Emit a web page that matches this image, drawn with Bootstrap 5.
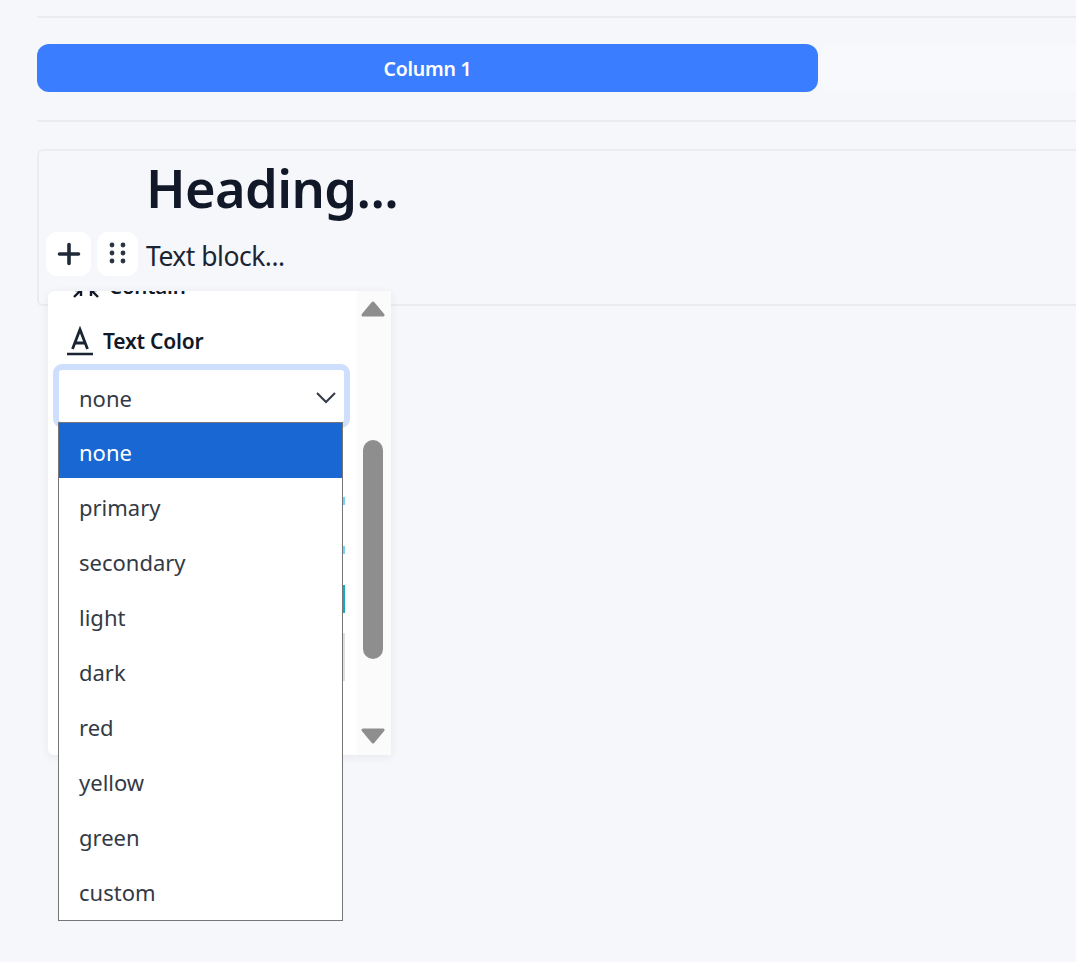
<!DOCTYPE html>
<html lang="en">
<head>
  <meta charset="UTF-8">
  <meta name="viewport" content="width=device-width, initial-scale=1.0">
  <title>Block editor</title>
  <link href="https://cdn.jsdelivr.net/npm/bootstrap@5.3.0/dist/css/bootstrap.min.css" rel="stylesheet">
  <style>
    html, body { height: 100%; }
    body {
      background: #f6f7fb;
      color: #111827;
      font-family: "Noto Sans", "Open Sans", sans-serif;
      overflow: hidden;
    }
    .editor-page { position: relative; height: 962px; padding: 16px 0 0 37px; }
    .rule-line { height: 2px; background: #ebecf0; }

    /* Columns row */
    .column-row { margin: 26px 0 28px; height: 48px; }
    .column-one {
      width: 781px;
      padding-top: 2px;
      background: #3b7dff;
      color: #fff;
      border-radius: 12px;
      font-size: 19.5px;
      font-weight: 600;
      letter-spacing: -0.25px;
    }
    .column-two { background: #f8f9fc; border-radius: 12px 0 0 12px; margin-left: 3px; }

    /* Editor box */
    .editor-box {
      margin-top: 27px;
      height: 157px;
      border: 2px solid #ebecf0;
      border-right: 0;
      border-radius: 6px 0 0 6px;
      padding: 0 0 0 108px;
    }
    .heading-text { font-size: 52.400px; font-weight: 600; line-height: 72px; letter-spacing: -0.6px; margin: 1px 0 0 -1px; color: #111827; }
    .body-text { font-size: 26.500px; line-height: 36px; letter-spacing: -0.5px; margin: 14px 0 0 -1px; color: #1b2433; }

    /* Block tools */
    .tool-btn {
      position: absolute;
      top: 232px;
      height: 44px;
      background: #fff;
      border-radius: 11px;
    }
    .tool-add { left: 46px; width: 45px; }
    .tool-drag { left: 97px; width: 41px; }

    /* Settings popup */
    .settings-pop {
      position: absolute;
      left: 48px;
      top: 291px;
      width: 343px;
      height: 464px;
      background: #fff;
      border-radius: 6px 0 0 6px;
      box-shadow: 0 2px 10px rgba(30, 40, 70, .07);
      overflow: hidden;
    }
    .clip-label {
      position: absolute;
      left: 61px;
      top: -20px;
      font-size: 20.500px;
      font-weight: 600;
      letter-spacing: -0.2px;
      color: #111827;
    }
    .clip-icon { position: absolute; left: 24px; top: -6px; }
    .field-label {
      position: absolute;
      left: 18px;
      top: 33px;
      color: #111827;
      gap: 9px;
    }
    .field-text { font-size: 21px; font-weight: 600; letter-spacing: -0.2px; padding-top: 2px; }
    .select-focus {
      position: absolute;
      left: 5px;
      top: 73px;
      width: 297px;
      height: 64px;
      border: 6px solid #cddffd;
      border-radius: 9px;
      background: #fff;
    }
    .select-value {
      position: absolute;
      left: 31px;
      top: 93px;
      font-size: 22px;
      line-height: 28px;
      color: #333a45;
    }
    .select-caret { position: absolute; left: 268px; top: 100px; }
    .peek-mark { position: absolute; left: 295px; width: 2px; background: #6fd3ff; }
    .peek-a { top: 206px; height: 8px; }
    .peek-b { top: 255px; height: 8px; }
    .peek-c { top: 294px; height: 28px; background: #12aac4; }
    .peek-d { top: 342px; height: 48px; background: #d9dfe3; }

    /* Scrollbar */
    .pop-scroll { position: absolute; right: 0; top: 0; width: 34px; height: 464px; background: #fbfbfc; }
    .scroll-thumb {
      position: absolute;
      left: 6px;
      top: 149px;
      width: 20px;
      height: 219px;
      background: #8e8e8e;
      border-radius: 10px;
    }
    .scroll-up { position: absolute; left: 4px; top: 9px; }
    .scroll-down { position: absolute; left: 4px; top: 436px; }

    /* Open select list */
    .option-list {
      position: absolute;
      left: 58px;
      top: 422px;
      width: 285px;
      height: 499px;
      background: #fff;
      border: 1px solid #767676;
      font-size: 22px;
      color: #333a45;
    }
    .option-item { height: 55px; padding-left: 20px; line-height: 58px; }
    .option-on { background: #1967d2; color: #fff; }
  </style>
</head>
<body>
  <div class="editor-page">
    <div class="rule-line"></div>

    <!-- Columns -->
    <div class="column-row d-flex">
      <div class="column-one d-flex align-items-center justify-content-center">Column 1</div>
      <div class="column-two flex-grow-1"></div>
    </div>
    <div class="rule-line"></div>

    <!-- Heading and text blocks -->
    <div class="editor-box">
      <h1 class="heading-text">Heading...</h1>
      <p class="body-text">Text block...</p>
    </div>

    <div class="tool-btn tool-add d-flex align-items-center justify-content-center">
      <svg width="24" height="24" viewBox="0 0 24 24"><path d="M12 2.500v19M2.500 12h19" stroke="#1f2937" stroke-width="3.600" stroke-linecap="round" fill="none"/></svg>
    </div>
    <div class="tool-btn tool-drag d-flex align-items-center justify-content-center">
      <svg width="18" height="24" viewBox="0 0 18 24"><g fill="#2b3442"><circle cx="3" cy="3" r="2.400"/><circle cx="14" cy="3" r="2.400"/><circle cx="3" cy="11" r="2.400"/><circle cx="14" cy="11" r="2.400"/><circle cx="3" cy="19" r="2.400"/><circle cx="14" cy="19" r="2.400"/></g></svg>
    </div>

    <!-- Block settings popup -->
    <div class="settings-pop">
      <svg class="clip-icon" width="28" height="14" viewBox="0 0 28 14"><path d="M2 12 9 5M3 5h6v6M26 12 19 5M25 5h-6v6" stroke="#111827" stroke-width="2.400" fill="none"/></svg>
      <span class="clip-label">Contain</span>

      <div class="field-label d-flex align-items-center">
        <svg width="28" height="30" viewBox="0 0 28 30"><path d="M6.500 23 14 3.500 21.500 23M9 17h10" stroke="#1b2433" stroke-width="2.800" fill="none"/><path d="M1 28h26" stroke="#1b2433" stroke-width="2.600"/></svg>
        <span class="field-text">Text Color</span>
      </div>

      <div class="select-focus"></div>
      <div class="select-value">none</div>
      <svg class="select-caret" width="20" height="14" viewBox="0 0 20 14"><path d="M1 2l9 9 9-9" stroke="#333a45" stroke-width="2" fill="none"/></svg>

      <span class="peek-mark peek-a"></span>
      <span class="peek-mark peek-b"></span>
      <span class="peek-mark peek-c"></span>
      <span class="peek-mark peek-d"></span>

      <div class="pop-scroll">
        <svg class="scroll-up" width="24" height="18" viewBox="0 0 24 18"><path d="M12 3 22 15H2z" fill="#8e8e8e" stroke="#8e8e8e" stroke-width="3" stroke-linejoin="round"/></svg>
        <div class="scroll-thumb"></div>
        <svg class="scroll-down" width="24" height="18" viewBox="0 0 24 18"><path d="M12 15 22 3H2z" fill="#8e8e8e" stroke="#8e8e8e" stroke-width="3" stroke-linejoin="round"/></svg>
      </div>
    </div>

    <!-- Open select options -->
    <div class="option-list">
      <div class="option-item option-on">none</div>
      <div class="option-item">primary</div>
      <div class="option-item">secondary</div>
      <div class="option-item">light</div>
      <div class="option-item">dark</div>
      <div class="option-item">red</div>
      <div class="option-item">yellow</div>
      <div class="option-item">green</div>
      <div class="option-item">custom</div>
    </div>
  </div>

  <script src="https://cdn.jsdelivr.net/npm/bootstrap@5.3.0/dist/js/bootstrap.bundle.min.js"></script>
</body>
</html>
